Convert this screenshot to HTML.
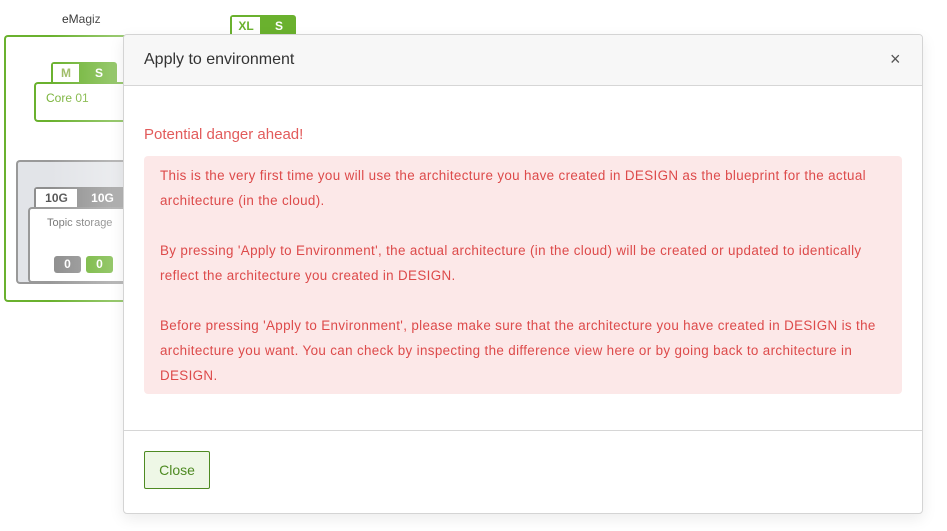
<!DOCTYPE html>
<html><head><style>
body{margin:0;width:947px;height:531px;background:#fff;font-family:"Liberation Sans",sans-serif;position:relative;overflow:hidden}
.a{position:absolute}
.tab{position:absolute;font-weight:bold;font-size:12px;text-align:center;line-height:18px}
</style></head><body>
<div class="a" style="left:62px;top:12px;font-size:12px;color:#222">eMagiz</div>
<div class="a" style="left:230px;top:15px;width:66px;height:20px;background:#6ab12e;border-radius:3px 3px 0 0"></div>
<div class="tab" style="left:232px;top:17px;width:28px;background:#fff;color:#6ab12e">XL</div>
<div class="tab" style="left:262px;top:17px;width:34px;color:#fff">S</div>
<div class="a" style="left:4px;top:35px;width:130px;height:263px;border:2px solid #6ab12e;border-right:none;border-radius:4px 0 0 4px"></div>
<div class="a" style="left:51px;top:62px;width:66px;height:21px;background:#6ab12e;border-radius:3px 3px 0 0"></div>
<div class="tab" style="left:53px;top:64px;width:26px;background:#fff;color:#9ab85e">M</div>
<div class="tab" style="left:81px;top:64px;width:36px;color:#fff">S</div>
<div class="a" style="left:34px;top:82px;width:100px;height:36px;border:2px solid #6ab12e;border-right:none;border-radius:4px 0 0 4px;background:#fff"></div>
<div class="a" style="left:46px;top:91px;font-size:12px;color:#7ab33a">Core 01</div>
<div class="a" style="left:16px;top:160px;width:110px;height:120px;border:2px solid #999;border-right:none;border-radius:4px 0 0 4px;background:#e2e4e8"></div>
<div class="a" style="left:34px;top:187px;width:92px;height:21px;background:#8e8e8e;border-radius:3px 3px 0 0"></div>
<div class="tab" style="left:36px;top:189px;width:41px;background:#fff;color:#555">10G</div>
<div class="tab" style="left:79px;top:189px;width:47px;color:#fff">10G</div>
<div class="a" style="left:28px;top:207px;width:98px;height:72px;border:2px solid #999;border-right:none;border-radius:4px 0 0 4px;background:#fff"></div>
<div class="a" style="left:47px;top:217px;font-size:11px;color:#777">Topic storage</div>
<div class="a" style="left:54px;top:256px;width:27px;height:17px;background:#8e8e8e;border-radius:3px;color:#fff;font-size:12px;font-weight:bold;text-align:center;line-height:17px">0</div>
<div class="a" style="left:86px;top:256px;width:27px;height:17px;background:#6ab12e;border-radius:3px;color:#fff;font-size:12px;font-weight:bold;text-align:center;line-height:17px">0</div>
<div class="a" style="left:0;top:0;width:130px;height:531px;background:linear-gradient(90deg,rgba(255,255,255,0) 50px,rgba(255,255,255,.35) 125px)"></div>
<div class="a" style="left:123px;top:34px;width:798px;height:478px;border:1px solid #d4d4d4;border-radius:4px;background:#fff;box-shadow:0 5px 15px rgba(0,0,0,.08);overflow:hidden">
 <div style="height:50px;background:#f7f7f7;border-bottom:1px solid #d6d6d6;position:relative">
  <div class="a" style="left:20px;top:16px;font-size:16px;color:#333">Apply to environment</div>
  <div class="a" style="left:766px;top:14px;font-size:18px;color:#555">×</div>
 </div>
 <div class="a" style="left:20px;top:91px;font-size:15px;color:#e25b5b">Potential danger ahead!</div>
 <div class="a" style="left:20px;top:121px;width:726px;height:231px;padding:7px 16px 0 16px;background:#fce8e8;border-radius:4px;color:#dd4a4a;font-size:13.4px;line-height:25px;white-space:nowrap;letter-spacing:0.35px">
 This is the very first time you will use the architecture you have created in DESIGN as the blueprint for the actual<br>architecture (in the cloud).<br><br>
 By pressing 'Apply to Environment', the actual architecture (in the cloud) will be created or updated to identically<br>reflect the architecture you created in DESIGN.<br><br>
 Before pressing 'Apply to Environment', please make sure that the architecture you have created in DESIGN is the<br>architecture you want. You can check by inspecting the difference view here or by going back to architecture in<br>DESIGN.
 </div>
 <div class="a" style="left:0;top:395px;width:798px;border-top:1px solid #d6d6d6"></div>
 <div class="a" style="left:20px;top:416px;width:64px;height:36px;border:1px solid #4e8a22;border-radius:2px;background:#eef7e6;color:#4e8a22;font-size:14px;text-align:center;line-height:36px">Close</div>
</div>
</body></html>
